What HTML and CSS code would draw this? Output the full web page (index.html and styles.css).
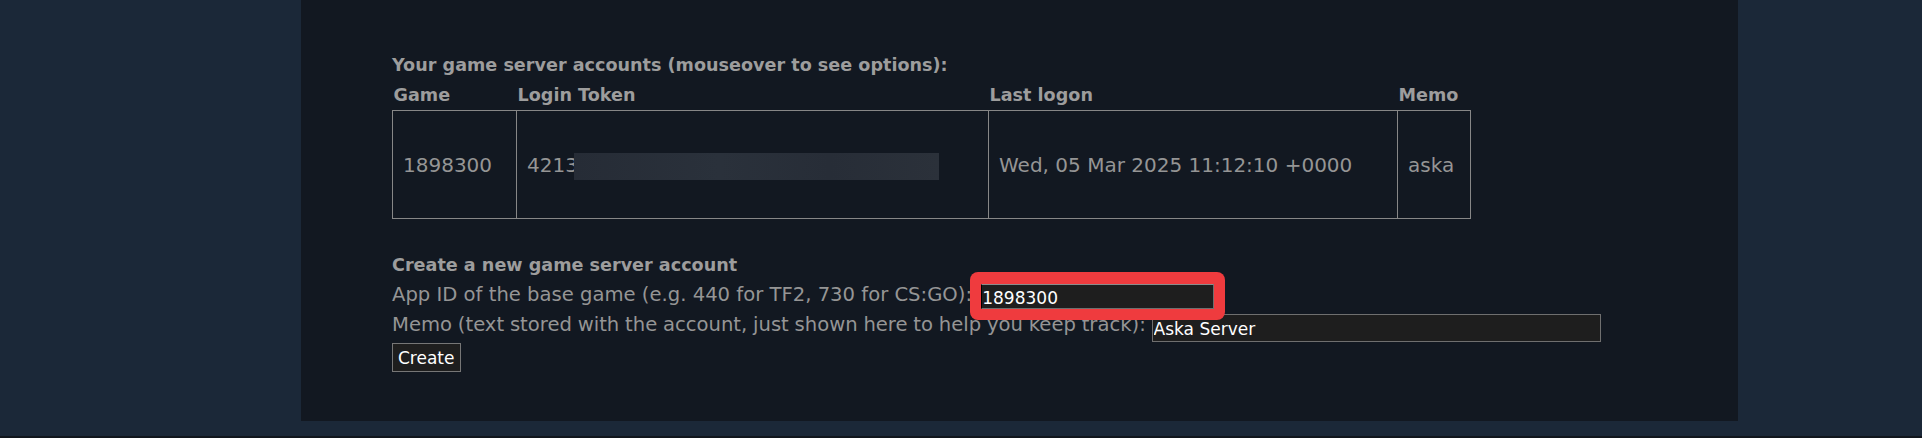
FILE: index.html
```html
<!DOCTYPE html>
<html lang="en">
<head>
    <meta charset="UTF-8">
    <title>Manage game servers</title>
    <link rel="stylesheet" href="styles.css">
</head>
<body>

  <div class="page">
      <div class="panel">

          <h3 class="title">Your game server accounts (mouseover to see options):</h3>

          <table class="accounts">
              <colgroup>
                  <col class="col-game">
                  <col class="col-token">
                  <col class="col-logon">
                  <col class="col-memo">
              </colgroup>
              <thead>
                  <tr>
                      <th>Game</th>
                      <th>Login Token</th>
                      <th>Last logon</th>
                      <th>Memo</th>
                  </tr>
              </thead>
              <tbody>
                  <tr>
                      <td>1898300</td>
                      <td>4213<span class="redact"></span></td>
                      <td>Wed, 05 Mar 2025 11:12:10 +0000</td>
                      <td>aska</td>
                  </tr>
              </tbody>
          </table>

          <form class="create" id="createForm">
              <h3 class="title title-create">Create a new game server account</h3>
              <div class="line">App ID of the base game (e.g. 440 for TF2, 730 for CS:GO): <span class="mark"><input type="text" class="field field-appid" value="1898300"></span></div>
              <div class="line line-memo">Memo (text stored with the account, just shown here to help you keep track): <input type="text" class="field field-memo" value="Aska Server"></div>
              <button type="submit" class="btn">Create</button>
          </form>

      </div>
  </div>
  <div class="footer"></div>

</body>
</html>
```

FILE: styles.css
```css
body {
    margin: 0;
    background-color: #1b2838;
    font-family: "DejaVu Sans", Verdana, sans-serif;
    color: #959595;
    overflow: hidden;
}

.page {
    padding-bottom: 15px;
}

.panel {
    box-sizing: border-box;
    margin-left: 301px;
    width: 1437px;
    height: 421px;
    padding: 50px 0 0 91px;
    background-color: #121821;
}

.title {
    margin: 0;
    font-size: 17.6px;
    line-height: 30px;
    font-weight: bold;
    color: #9d9d9d;
}

.title-create {
    margin-top: 31px;
}

/* accounts table */
.accounts {
    table-layout: fixed;
    width: 1078px;
    border-collapse: collapse;
}

.col-game { width: 124px; }
.col-token { width: 472px; }
.col-logon { width: 409px; }
.col-memo { width: 73px; }

.accounts th {
    padding: 0 1px;
    text-align: left;
    font-size: 17.6px;
    line-height: 30px;
    color: #9d9d9d;
    white-space: nowrap;
}

.accounts td {
    height: 107px;
    padding: 0 10px;
    border: 1px solid #878787;
    font-size: 20px;
    vertical-align: middle;
    white-space: nowrap;
}

.redact {
    display: inline-block;
    width: 365px;
    height: 27px;
    margin: 0 0 -4px -4px;
    vertical-align: -4px;
    background: linear-gradient(90deg, #262c36, #2a313b 40%, #272d37 70%, #2b313a);
}

/* create form */
.line {
    height: 30px;
    line-height: 30px;
    font-size: 19.6px;
    white-space: nowrap;
}

.line-memo {
    word-spacing: -0.45px;
}

.mark {
    position: relative;
    display: inline-block;
    vertical-align: top;
    margin: 4px 0 0 3px;
}

    .mark::before {
        content: "";
        position: absolute;
        top: -12px;
        right: -11px;
        bottom: -11px;
        left: -11px;
        border-radius: 8px;
        background-color: #ef3b3e;
        z-index: 0;
    }

.field {
    box-sizing: border-box;
    display: inline-block;
    padding: 2px 2px 0 1px;
    font-family: "DejaVu Sans", Verdana, sans-serif;
    font-size: 17px;
    color: #ffffff;
    background-color: #1e1e1e;
    border: 1px solid #6f6f6f;
    border-radius: 0;
    vertical-align: top;
    word-spacing: normal;
}

.field-appid {
    position: relative;
    z-index: 1;
    display: block;
    width: 233px;
    height: 25px;
    padding-left: 0;
    border-top-color: #8c8c8c;
    border-left-color: #000000;
}

.field-memo {
    width: 449px;
    height: 28px;
    margin-top: 4px;
}

.btn {
    display: block;
    box-sizing: border-box;
    height: 29px;
    margin-top: 3px;
    padding: 0 5px;
    font-family: "DejaVu Sans", Verdana, sans-serif;
    font-size: 17px;
    color: #ffffff;
    background-color: #1e1e1e;
    border: 1px solid #767676;
    border-radius: 0;
    cursor: pointer;
}

.footer {
    height: 10px;
    background-color: #11161d;
}
```
